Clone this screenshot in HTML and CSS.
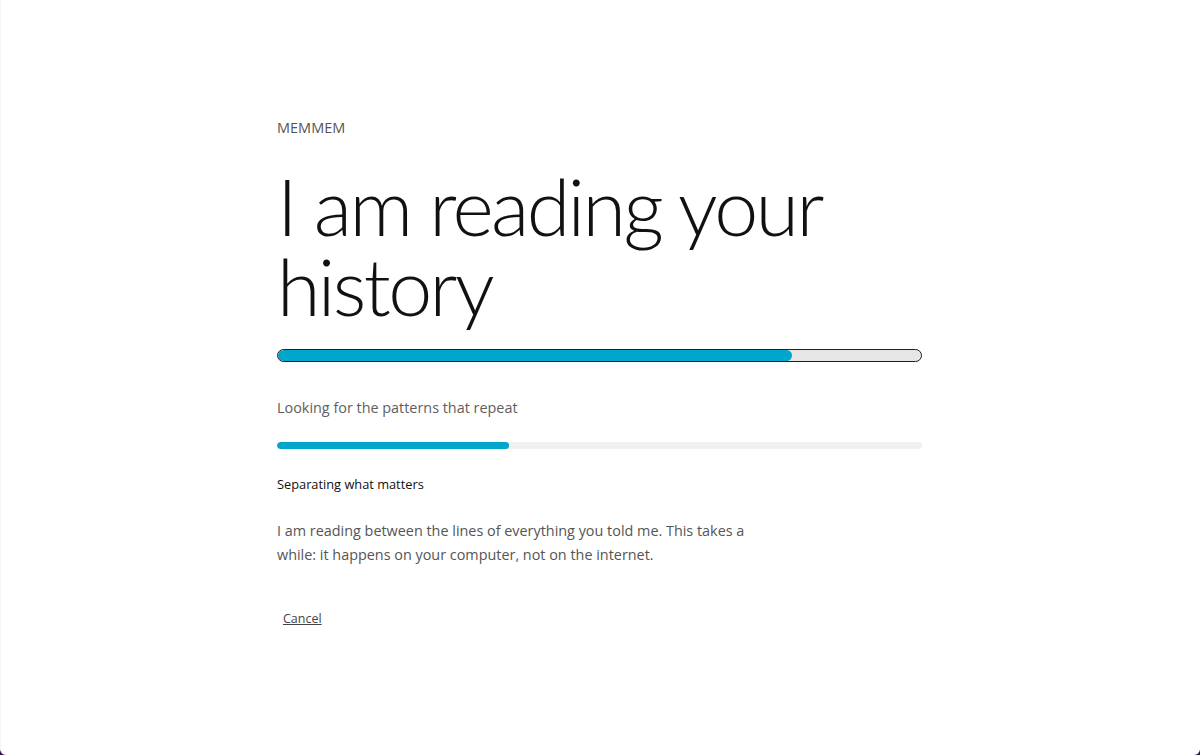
FILE: index.html
```html
<!DOCTYPE html>
<html lang="en">
<head>
<meta charset="utf-8">
<title>MEMMEM</title>
<link rel="stylesheet" href="styles.css">
</head>
<body>
<div class="window">
  <main class="content">
    <div class="brand">MEMMEM</div>
    <h1 class="title">I am reading your history</h1>
    <div class="bar-main"><div class="bar-main-fill" style="width:80%"></div></div>
    <p class="stage">Looking for the patterns that repeat</p>
    <div class="bar-sub"><div class="bar-sub-fill" style="width:36%"></div></div>
    <p class="substage">Separating what matters</p>
    <p class="desc">I am reading between the lines of everything you told me. This takes a while: it happens on your computer, not on the internet.</p>
    <button class="cancel" type="button">Cancel</button>
  </main>
</div>
</body>
</html>
```
FILE: styles.css
```css
html, body {
  margin: 0;
  padding: 0;
}
body {
  background: #35104f;
  font-family: "Open Sans", "Noto Sans", sans-serif;
}
.window {
  width: 1200px;
  height: 755px;
  background: #ffffff;
  border-radius: 0 0 6px 6px;
  box-sizing: border-box;
  border-left: 1px solid #f4f4f4;
}
.content {
  padding: 118px 0 0 276px;
  width: 645px;
  display: flex;
  flex-direction: column;
}
.brand {
  font-size: 14.5px;
  line-height: 20px;
  color: #555555;
}
.title {
  margin: 28px 0 0 0;
  font-family: "Lato", "Open Sans", sans-serif;
  font-size: 79px;
  line-height: 80px;
  font-weight: 300;
  color: #111111;
  letter-spacing: -2.6px;
  width: 600px;
}
.bar-main {
  margin-top: 23px;
  height: 13px;
  box-sizing: border-box;
  border: 1.5px solid #1e1e1e;
  border-radius: 7px;
  background: #e6e6e6;
  overflow: hidden;
}
.bar-main-fill {
  height: 100%;
  background: #00a6cc;
  border-radius: 6px;
}
.stage {
  margin: 36px 0 0 0;
  font-size: 14.4px;
  line-height: 20px;
  color: #5e5e5e;
}
.bar-sub {
  margin-top: 24px;
  height: 7px;
  border-radius: 4px;
  background: #f0f0f0;
  overflow: hidden;
}
.bar-sub-fill {
  height: 100%;
  background: #00a6cc;
  border-radius: 4px;
}
.substage {
  margin: 26px 0 0 0;
  font-size: 12.8px;
  line-height: 18px;
  color: #111111;
}
.desc {
  margin: 26px 0 0 0;
  font-size: 14.4px;
  line-height: 24px;
  color: #555555;
  width: 480px;
}
.cancel {
  align-self: flex-start;
  margin-top: 43px;
  padding: 0 6px;
  border: none;
  background: none;
  font-family: inherit;
  font-size: 12.5px;
  line-height: 18px;
  color: #444444;
  text-decoration: underline;
  cursor: pointer;
}
```
